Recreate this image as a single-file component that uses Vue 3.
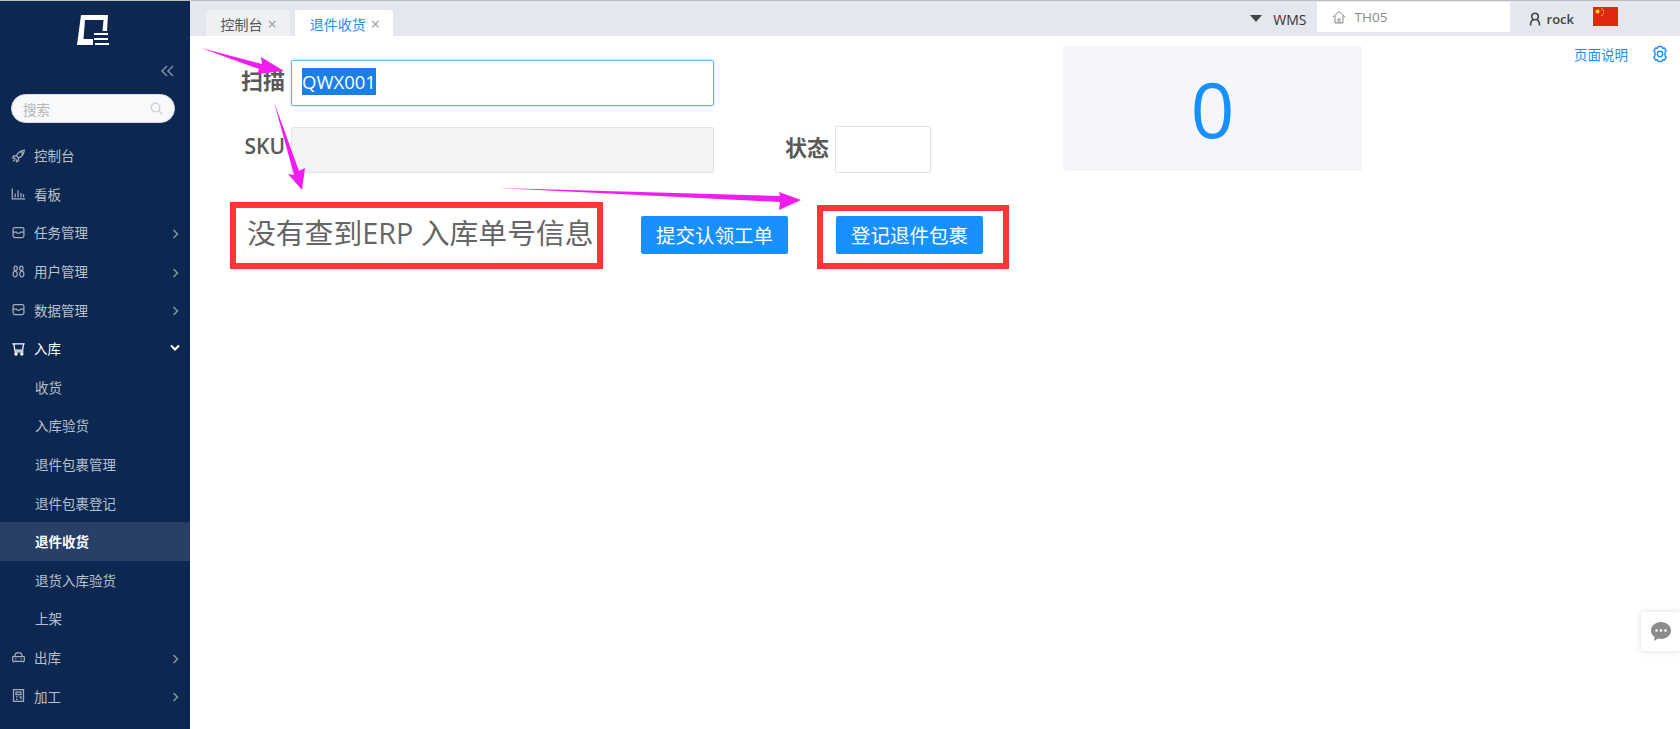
<script setup>
const icons = {
  rocket: 'M6.500 9.500C8 5.500 11.500 3 16 2.500 15.500 7 13 10.500 9 12ZM6.500 9.500L3 9.500 2 12 5.500 12M9 12L9 15.500 6.500 16.500 6.500 13.500M5 13.500L2.500 16M11 5.500a1.300 1.300 0 1 1 1.500 1.500',
  chart: 'M1.500 3V15.500H17M5 13.500V9M8.500 13.500V5M12 13.500V8.500M15 13.500V10',
  box: 'M4.500 3H13.500A2 2 0 0 1 15.500 5V13A2 2 0 0 1 13.500 15H4.500A2 2 0 0 1 2.500 13V5A2 2 0 0 1 4.500 3ZM2.500 8.500H6.500C7 10.500 11 10.500 11.500 8.500H15.500',
  apps: 'M5.500 2.500C8 2.500 8.500 8 5.500 8 3 8 3 2.500 5.500 2.500ZM12.500 2.500C15 2.500 15 8 12.500 8 9.500 8 10 2.500 12.500 2.500ZM5 8.500C8 8.500 8.500 15.500 5 15.500 1.500 15.500 2 8.500 5 8.500ZM13 8.500C16 8.500 16.500 15.500 13 15.500 9.500 15.500 10 8.500 13 8.500Z',
  cart: 'M1.500 3.500H16.500M3.500 3.500L4.500 11H14L15 3.500M4 13H15',
  car: 'M4 8.500L5.500 4.500Q6 3.500 7 3.500H11Q12 3.500 12.500 4.500L14 8.500M2 8.500Q2 8 3 8H15Q16 8 16 8.500V12.500Q16 13.500 15 13.500H3Q2 13.500 2 12.500ZM3 13.500V15M15 13.500V15M5 11H6.500M11.500 11H13',
  calc: 'M3 2H15V16H3ZM6 5H12V8H6ZM6 10.500H8M10 10.500H12V13.500M6 13.500H8'
}
const menu = [
  { label: '控制台', icon: 'rocket' },
  { label: '看板', icon: 'chart' },
  { label: '任务管理', icon: 'box', arrow: true },
  { label: '用户管理', icon: 'apps', arrow: true },
  { label: '数据管理', icon: 'box', arrow: true },
  { label: '入库', icon: 'cart', open: true },
  { label: '收货', sub: true },
  { label: '入库验货', sub: true },
  { label: '退件包裹管理', sub: true },
  { label: '退件包裹登记', sub: true },
  { label: '退件收货', sub: true, active: true },
  { label: '退货入库验货', sub: true },
  { label: '上架', sub: true },
  { label: '出库', icon: 'car', arrow: true },
  { label: '加工', icon: 'calc', arrow: true }
]
</script>

<template>
  <div class="app">
    <aside class="side">
      <div class="logo">
        <svg width="34" height="32" viewBox="0 0 34 32">
          <path fill="#fff" d="M5 1H32L31 17H26.500L27.500 6H9L7.500 25H17V31H1Z" />
          <path fill="#fff" d="M18 19H32V21H18ZM18 24H32V26H18ZM19 29H33V31H19Z" />
        </svg>
      </div>
      <div class="collapse">
        <svg width="13" height="12" viewBox="0 0 13 12" fill="none" stroke="#8793a8" stroke-width="1.400">
          <path d="M6 1L1 6l5 5M12 1L7 6l5 5" />
        </svg>
      </div>
      <div class="search">
        <span>搜索</span>
        <svg width="13" height="13" viewBox="0 0 13 13" fill="none" stroke="#c9ccd2" stroke-width="1.200">
          <circle cx="5.500" cy="5.500" r="4.300" />
          <path d="M9 9l3 3" />
        </svg>
      </div>
      <nav class="menu">
        <div
          v-for="item in menu"
          :key="item.label"
          class="row"
          :class="{ sub: item.sub, active: item.active, open: item.open }"
        >
          <svg v-if="item.icon" class="ico" width="15" height="15" viewBox="0 0 18 18" fill="none" stroke="currentColor" stroke-width="1.500">
            <path :d="icons[item.icon]" />
            <template v-if="item.icon === 'cart'">
              <circle cx="6" cy="15.500" r="1.300" fill="currentColor" />
              <circle cx="13" cy="15.500" r="1.300" fill="currentColor" />
            </template>
          </svg>
          <span class="lbl">{{ item.label }}</span>
          <svg v-if="item.arrow" class="chev" width="8" height="10" viewBox="0 0 8 10" fill="none" stroke="#8793a8" stroke-width="1.500">
            <path d="M1.500 1l4 4-4 4" />
          </svg>
          <svg v-if="item.open" class="chev down" width="10" height="8" viewBox="0 0 10 8" fill="none" stroke="#fff" stroke-width="2">
            <path d="M1 1.500l4 4 4-4" />
          </svg>
        </div>
      </nav>
    </aside>

    <main class="main">
      <header class="bar">
        <div class="tabs">
          <div class="tab">控制台 <i>×</i></div>
          <div class="tab on">退件收货 <i>×</i></div>
        </div>
        <div class="tools">
          <span class="tri"></span>
          <span class="wms">WMS</span>
          <div class="wh">
            <svg width="14" height="14" viewBox="0 0 14 14" fill="none" stroke="#888" stroke-width="1">
              <path d="M1 7l6-5.500L13 7M3 6v7h8V6M6 13V9h2v4" />
            </svg>
            <span>TH05</span>
          </div>
          <svg class="user" width="12" height="14" viewBox="0 0 12 14" fill="none" stroke="#444" stroke-width="1.600">
            <circle cx="6" cy="4.500" r="3.300" />
            <path d="M1.500 13.500c0-3 1-5 2.500-5.800M10.500 13.500c0-3-1-5-2.500-5.800" />
          </svg>
          <span class="rock">rock</span>
          <svg class="flag" width="25" height="19" viewBox="0 0 25 19">
            <rect width="25" height="19" fill="#de2910" />
            <circle cx="4.500" cy="4.500" r="2" fill="#ffde00" />
            <circle cx="9" cy="2" r=".7" fill="#ffde00" />
            <circle cx="10.500" cy="4" r=".7" fill="#ffde00" />
            <circle cx="10.500" cy="6.500" r=".7" fill="#ffde00" />
            <circle cx="9" cy="8.500" r=".7" fill="#ffde00" />
          </svg>
        </div>
      </header>

      <section class="content">
        <div class="form">
          <div class="line">
            <label class="lab">扫描</label>
            <div class="scan"><span>QWX001</span></div>
          </div>
          <div class="line second">
            <label class="lab sku">SKU</label>
            <input class="sku-in" disabled />
            <label class="lab state">状态</label>
            <input class="state-in" />
          </div>
          <div class="actions">
            <span class="msg">没有查到ERP 入库单号信息</span>
            <button class="btn first">提交认领工单</button>
            <button class="btn">登记退件包裹</button>
          </div>
        </div>
        <div class="count">0</div>
        <div class="help">
          <a>页面说明</a>
          <svg width="18" height="18" viewBox="0 0 18 18" fill="none" stroke="#1890ff" stroke-width="1.400">
            <path stroke-linejoin="round" d="M7.300 1.500H10.700L11.500 3.300 13.400 3 15.200 5.800 14 7.300V10.700L15.200 12.200 13.400 15 11.500 14.700 10.700 16.500H7.300L6.500 14.700 4.600 15 2.800 12.200 4 10.700V7.300L2.800 5.800 4.600 3 6.500 3.300Z" />
            <circle cx="9" cy="9" r="2.700" />
          </svg>
        </div>
      </section>
    </main>

    <svg class="notes" width="1680" height="729" viewBox="0 0 1680 729">
      <g fill="none" stroke="#ff3636" stroke-width="6">
        <rect x="233" y="205" width="367" height="61" />
        <rect x="820" y="208" width="186" height="58" />
      </g>
      <g fill="#f31cf0">
        <path d="M201 48L262 64L261 57L284 71L257 74L259 69Z" />
        <path d="M274 102L294 175L288 174L302 190L305 168L299 171Z" />
        <path d="M498 188L780 196L779 192L801 200L779 210L780 202Z" />
      </g>
    </svg>

    <div class="chat">
      <svg width="22" height="21" viewBox="0 0 22 21">
        <path fill="#8c8c8c" d="M11 1c5.500 0 10 3.600 10 8.500S16.500 18 11 18c-1 0-2-.1-3-.4L4 20l.6-4C2.400 14.400 1 12.200 1 9.500 1 4.600 5.500 1 11 1z" />
        <circle cx="6.500" cy="9.500" r="1.300" fill="#fff" />
        <circle cx="11" cy="9.500" r="1.300" fill="#fff" />
        <circle cx="15.500" cy="9.500" r="1.300" fill="#fff" />
      </svg>
    </div>
  </div>
</template>

<style>
html, body { margin: 0; padding: 0; background: #fff; overflow: hidden; }
</style>

<style scoped>
* { box-sizing: border-box; }
.app {
  position: relative;
  display: flex;
  width: 1680px;
  height: 729px;
  overflow: hidden;
  font-family: "Open Sans", "Noto Sans CJK SC", sans-serif;
  border-top: 1px solid #bdbdbd;
}
.side {
  width: 189.500px;
  flex: none;
  background: #0c2850;
  color: #b8c0cd;
}
.logo { display: flex; justify-content: center; padding: 13px 4px 0 0; height: 64px; }
.collapse { display: flex; justify-content: flex-end; padding-right: 16px; height: 29px; }
.search {
  display: flex;
  align-items: center;
  justify-content: space-between;
  width: 164px;
  height: 29px;
  margin-left: 11px;
  padding: 0 12px 0 11px;
  border-radius: 15px;
  background: #f8f9fa;
  border: 1px solid #d7dbe2;
  color: #b5b5b5;
  font-size: 13.500px;
}
.search svg { margin-right: -1px; }
.menu { margin-top: 13px; }
.row {
  display: flex;
  align-items: center;
  height: 38.600px;
  padding: 0 8px 0 11px;
  font-size: 13.500px;
}
.row .ico { color: #a3adbd; flex: none; margin-right: 8px; }
.row.open { color: #fff; }
.row.open .ico { color: #fff; }
.row.sub { padding-left: 35px; }
.row.active { background: #283f66; color: #fff; font-weight: 700; }
.lbl { flex: 1; }
.chev { flex: none; margin: 3px 2px 0 0; }
.chev.down { margin-top: 0; }
.main { flex: 1; display: flex; flex-direction: column; min-width: 0; }
.bar {
  display: flex;
  justify-content: space-between;
  height: 35px;
  background: #e4e7ee;
}
.tabs { display: flex; align-items: flex-end; gap: 5px; padding-left: 16px; }
.tab {
  display: flex;
  align-items: center;
  height: 26px;
  padding: 1px 13px 0 15px;
  gap: 5px;
  background: #eef0f4;
  color: #555;
  font-size: 14px;
  border-radius: 2px 2px 0 0;
}
.tab i { font-style: normal; color: #999; font-size: 16px; }
.tab.on { background: #fff; color: #1890ff; }
.tools { display: flex; align-items: center; }
.tri {
  width: 0;
  height: 0;
  border-left: 6px solid transparent;
  border-right: 6px solid transparent;
  border-top: 7px solid #444;
  margin-right: 11px;
}
.wms { font-size: 14px; color: #333; margin-right: 10px; padding-top: 2px; }
.wh {
  display: flex;
  align-items: center;
  gap: 9px;
  width: 193px;
  height: 30px;
  padding: 0 0 0 15px;
  margin-bottom: 3px;
  background: #fff;
  color: #888;
  font-size: 13.500px;
}
.user { margin-left: 19px; margin-right: 6px; }
.rock { font-size: 13px; font-weight: 600; color: #444; margin-right: 19px; }
.flag { margin-right: 62px; margin-bottom: 5px; }
.content { flex: 1; display: flex; align-items: flex-start; }
.form { width: 873.500px; padding-top: 24px; flex: none; }
.line { display: flex; align-items: center; }
.second { margin-top: 20px; }
.lab {
  width: 95.500px;
  text-align: right;
  margin-right: 6px;
  font-size: 22px;
  line-height: 30px;
  font-weight: 700;
  color: #595959;
  position: relative;
  top: -3px;
}
.sku { font-weight: 600; font-size: 21px; top: -4px; }
.scan {
  display: flex;
  align-items: center;
  width: 423px;
  height: 46px;
  padding: 0 0 3px 10px;
  border: 1px solid #69b4ff;
  border-radius: 2px;
  box-shadow: 0 0 3px #a6d4ff;
}
.scan span {
  background: #1a7fe8;
  color: #fff;
  font-size: 18.500px;
  line-height: 27px;
}
.sku-in {
  width: 423px;
  height: 46px;
  border: 1px solid #e3e3e3;
  border-radius: 2px;
  background: #f3f3f3;
}
.state { width: 44px; margin-left: 71px; }
.state-in {
  width: 96px;
  height: 47px;
  border: 1px solid #e3e3e3;
  border-radius: 2px;
  background: #fff;
}
.actions { display: flex; align-items: center; margin-top: 43px; padding-left: 57.500px; }
.msg { font-size: 28.800px; color: #666; width: 346px; white-space: nowrap; line-height: 38px; position: relative; top: -2px; }
.btn {
  width: 147px;
  height: 38px;
  margin-left: 48px;
  border: 0;
  border-radius: 2px;
  background: #1890ff;
  color: #fff;
  font-family: inherit;
  font-size: 19.500px;
  padding: 0 0 2px;
}
.count {
  width: 299px;
  height: 125px;
  margin-top: 10px;
  background: #f5f6fa;
  color: #1890ff;
  font-size: 77px;
  line-height: 125px;
  text-align: center;
  border-radius: 2px;
  flex: none;
}
.help {
  flex: 1;
  display: flex;
  align-items: center;
  justify-content: flex-end;
  gap: 23px;
  padding: 8px 11px 0 0;
  color: #1890ff;
  font-size: 13.500px;
}
.notes { position: absolute; left: 0; top: -1px; pointer-events: none; }
.chat {
  position: absolute;
  right: 0;
  top: 611px;
  width: 39px;
  height: 39px;
  display: flex;
  align-items: center;
  justify-content: center;
  background: #fff;
  box-shadow: 0 0 6px rgba(0, 0, 0, .14);
  border-radius: 2px 0 0 2px;
}
</style>
